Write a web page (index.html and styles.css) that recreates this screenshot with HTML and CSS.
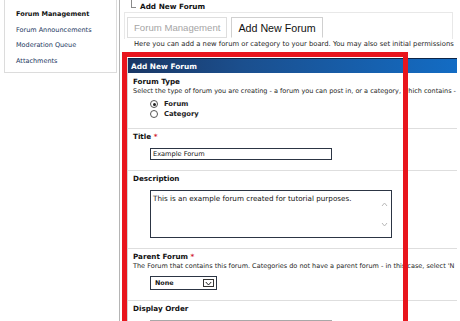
FILE: index.html
```html
<!DOCTYPE html>
<html lang="en">
  <head>
    <meta charset="UTF-8" />
    <meta name="viewport" content="width=device-width, initial-scale=1.0" />
    <title>Add New Forum</title>
    <link rel="stylesheet" href="styles.css">
  </head>
  <body>
    <div class="page">
      <aside class="sidebar">
        <ul class="side-menu">
          <li class="side-head">Forum Management</li>
          <li><a href="#">Forum Announcements</a></li>
          <li><a href="#">Moderation Queue</a></li>
          <li><a href="#">Attachments</a></li>
        </ul>
      </aside>

      <main class="main">
        <div class="crumb"><span class="crumb-line"></span>Add New Forum</div>

        <div class="tabs">
          <a href="#" class="tab">Forum Management</a>
          <a href="#" class="tab active">Add New Forum</a>
        </div>

        <p class="intro">Here you can add a new forum or category to your board. You may also set initial permissions</p>

        <form class="panel">
          <div class="panel-head">Add New Forum</div>

          <div class="row first">
            <div class="label">Forum Type</div>
            <div class="desc">Select the type of forum you are creating - a forum you can post in, or a category, which contains -</div>
            <div class="radios">
              <label class="radio"><span class="dot checked"></span>Forum</label>
              <label class="radio"><span class="dot"></span>Category</label>
            </div>
          </div>

          <div class="row">
            <div class="label">Title <span class="req">*</span></div>
            <div class="field text-field">Example Forum</div>
          </div>

          <div class="row">
            <div class="label">Description</div>
            <div class="field text-area">
              This is an example forum created for tutorial purposes.
              <svg class="scroll up" width="7" height="5" viewBox="0 0 7 5"><path d="M1 4 L3.5 1 L6 4" fill="none" stroke="#b9b9b9" stroke-width="1"/></svg>
              <svg class="scroll down" width="7" height="5" viewBox="0 0 7 5"><path d="M1 1 L3.5 4 L6 1" fill="none" stroke="#b9b9b9" stroke-width="1"/></svg>
            </div>
          </div>

          <div class="row">
            <div class="label">Parent Forum <span class="req">*</span></div>
            <div class="desc">The Forum that contains this forum. Categories do not have a parent forum - in this case, select 'N</div>
            <div class="field select">
              <span>None</span>
              <span class="select-btn">
                <svg width="7" height="5" viewBox="0 0 7 5"><path d="M0.8 1 L3.5 4 L6.2 1" fill="none" stroke="#222" stroke-width="1"/></svg>
              </span>
            </div>
          </div>

          <div class="row">
            <div class="label">Display Order</div>
            <div class="field text-field muted"></div>
          </div>
        </form>

        <!-- red highlight drawn over the form -->
        <div class="highlight"></div>
      </main>
    </div>
  </body>
</html>
```

FILE: styles.css
```css
body {
  margin: 0;
  background: #fff;
  font-family: "DejaVu Sans", Verdana, sans-serif;
  color: #1a1a1a;
  overflow: hidden;
}

.page {
  display: flex;
  height: 321px;
  overflow: hidden;
}

/* left menu */
.sidebar {
  width: 120px;
  flex-shrink: 0;
  border-right: 1px solid #b4b4b4;
  box-sizing: border-box;
  padding-left: 4px;
  padding-right: 2px;
}

.side-menu {
  list-style: none;
  margin: 0;
  padding: 9px 0 6px 11px;
  border: 1px solid #dcdcdc;
  border-top: none;
  display: flex;
  flex-direction: column;
  gap: 5.5px;
}

.side-menu li {
  font-size: 6.5px;
  line-height: 10px;
}

.side-menu a {
  color: #22375e;
  text-decoration: none;
}

.side-head {
  font-weight: bold;
  color: #111;
}

/* main column */
.main {
  flex: 1;
  position: relative;
  padding-left: 4px;
  padding-right: 3px;
}

.crumb {
  height: 12px;
  display: flex;
  align-items: center;
  padding-left: 7px;
  font-size: 7.3px;
  font-weight: bold;
  color: #111;
}

.crumb-line {
  width: 4px;
  height: 8px;
  margin-top: -6px;
  margin-right: 4px;
  border-left: 1px solid #8a8a8a;
  border-bottom: 1px solid #8a8a8a;
}

.tabs {
  display: flex;
  gap: 4px;
  padding: 4px 2px 1px 2px;
  border: 1px solid #e8e8e8;
  border-bottom: none;
  margin-right: 4px;
}

.tab {
  height: 21px;
  box-sizing: border-box;
  display: flex;
  align-items: center;
  padding: 0 6px;
  border: 1px solid #dedede;
  font-family: "Liberation Sans", Arial, sans-serif;
  font-size: 9.6px;
  color: #a5a5a5;
  text-decoration: none;
}

.tab.active {
  border-color: #d0d0d0;
  border-bottom-color: #fff;
  color: #111;
  font-size: 10.7px;
}

.intro {
  margin: 0;
  padding: 1px 0 0 10px;
  height: 18px;
  line-height: 9px;
  font-size: 6.8px;
  color: #1e1e1e;
  white-space: nowrap;
}

/* form panel */
.panel {
  margin-left: 3px;
  border-left: 1px solid #d4d4d4;
}

.panel-head {
  height: 15px;
  box-sizing: border-box;
  border-top: 1px solid #0c2548;
  padding-left: 3px;
  display: flex;
  align-items: center;
  background: linear-gradient(to right, #1a3765 0%, #1b4f8e 35%, #136cc4 100%);
  color: #fff;
  font-size: 7.4px;
  font-weight: bold;
}

.row {
  padding: 3px 0 10px 5px;
  border-top: 1px solid #dedede;
}

.row.first {
  border-top: none;
  padding-top: 4px;
  padding-bottom: 9px;
}

.label {
  font-size: 7.2px;
  line-height: 10px;
  font-weight: bold;
  color: #111;
}

.req {
  color: #d0182a;
}

.desc {
  font-size: 6.5px;
  line-height: 8px;
  color: #1e1e1e;
  white-space: nowrap;
}

.radios {
  margin: 4px 0 0 17px;
}

.radio {
  display: flex;
  align-items: center;
  height: 10px;
  gap: 6px;
  font-size: 6.8px;
  font-weight: bold;
  color: #222;
}

.dot {
  width: 8px;
  height: 8px;
  box-sizing: border-box;
  border: 1px solid #555;
  border-radius: 50%;
  display: flex;
  align-items: center;
  justify-content: center;
}

.dot.checked::after {
  content: "";
  width: 3px;
  height: 3px;
  border-radius: 50%;
  background: #222;
}

.field {
  margin: 6px 0 0 17px;
  box-sizing: border-box;
  border: 1px solid #2c3544;
  font-size: 6.6px;
  color: #111;
}

.text-field {
  width: 182px;
  height: 12px;
  line-height: 10px;
  padding-left: 2px;
}

.text-field.muted {
  border-color: #a8a8a8;
  border-top-width: 2px;
  background: #f7f7f7;
}

.text-area {
  position: relative;
  width: 242px;
  height: 48px;
  padding: 3px 2px;
  line-height: 9px;
  font-size: 7.2px;
}

.scroll {
  position: absolute;
  right: 3px;
}

.scroll.up {
  top: 11px;
}

.scroll.down {
  bottom: 10px;
}

.select {
  width: 67px;
  height: 14px;
  display: flex;
  align-items: center;
  justify-content: space-between;
  padding: 0 2px 0 4px;
  font-size: 6.4px;
  font-weight: bold;
}

.select-btn {
  width: 11px;
  height: 8px;
  box-sizing: border-box;
  border: 1px solid #333;
  display: flex;
  align-items: center;
  justify-content: center;
}

/* annotation box over the form */
.highlight {
  position: absolute;
  left: 2px;
  top: 52px;
  width: 286px;
  height: 290px;
  box-sizing: border-box;
  border: 5px solid #e8151d;
}
```
